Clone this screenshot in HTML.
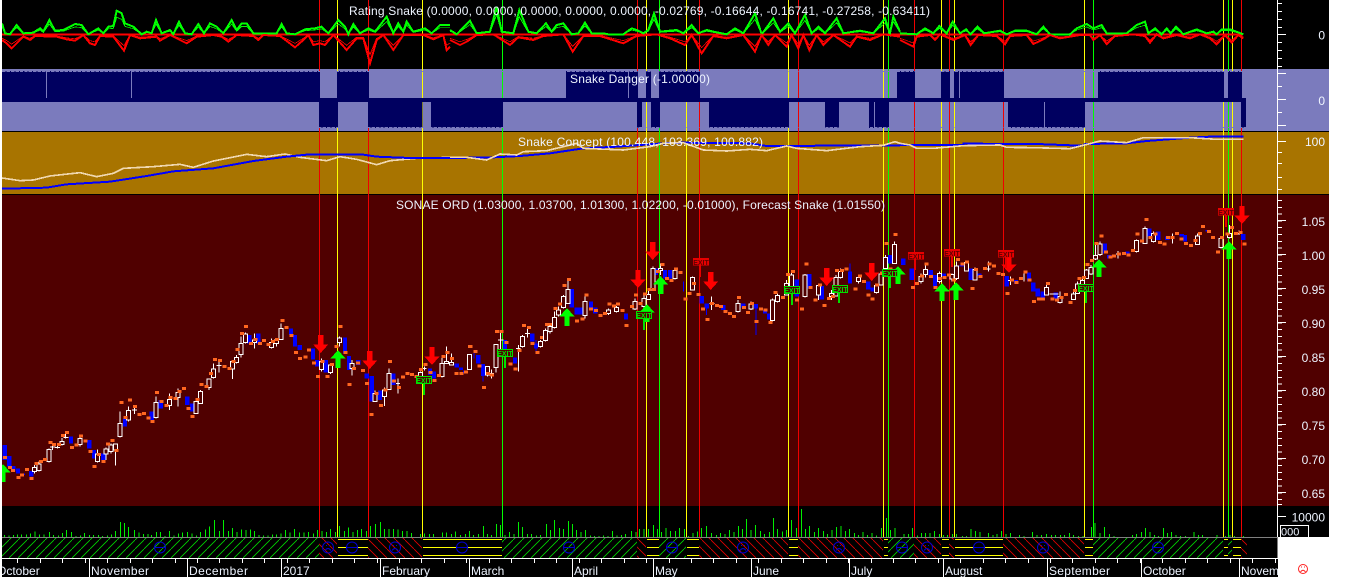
<!DOCTYPE html>
<html><head><meta charset="utf-8"><title>SONAE ORD</title>
<style>html,body{margin:0;padding:0;background:#fff;width:1352px;height:577px;overflow:hidden}svg{display:block}text{font-family:"Liberation Sans",sans-serif;font-size:12px;fill:#eef4ff}</style></head>
<body>
<svg xmlns="http://www.w3.org/2000/svg" width="1352" height="577" viewBox="0 0 1352 577">
<defs>
<pattern id="gh" width="9" height="9" patternUnits="userSpaceOnUse"><path d="M0 9L9 0" stroke="#00d800" stroke-width=".8" fill="none"/></pattern>
<pattern id="rh" width="9" height="9" patternUnits="userSpaceOnUse"><path d="M0 0L9 9" stroke="#e80000" stroke-width=".8" fill="none"/></pattern>
<polygon id="u" points="0,0 7.5,8.5 2.7,8.5 2.7,18 -2.7,18 -2.7,8.5 -7.5,8.5" fill="#00ff00"/>
<polygon id="d" points="0,18 7.5,9.5 2.7,9.5 2.7,0 -2.7,0 -2.7,9.5 -7.5,9.5" fill="#ff0000"/>
<g id="fn" fill="none" stroke="#0000d0"><circle r="5.5"/><path d="M-5 0H5"/></g>
<g id="ff" fill="none" stroke="#0000d0"><circle r="5.5"/><path d="M-3 3Q0 -1 3 3"/><path d="M-2 -2h1M1 -2h1"/></g>
</defs>
<g shape-rendering="crispEdges">
<rect x="2" y="0" width="1327" height="69" fill="#000"/>
<rect x="2" y="69" width="1327" height="62" fill="#7b7bbd"/>
<rect x="2" y="131" width="1327" height="63" fill="#a87400"/>
<rect x="2" y="194" width="1327" height="312" fill="#500000"/>
<rect x="2" y="506" width="1327" height="31" fill="#000"/>
<rect x="2" y="537" width="1276" height="40" fill="#000"/>
<rect x="2" y="131" width="1327" height="1" fill="#000"/>
<rect x="2" y="194" width="1327" height="1" fill="#000"/>
<!-- vertical signal lines -->
<path stroke="#f00000" d="M319.5 0V537M368.5 0V537M637.5 0V537M699.5 0V537M798.5 0V537M914.5 0V537M949.5 0V537M1003.5 0V537M1241.5 0V537"/>
<path stroke="#ffff00" d="M337.5 0V537M422.5 0V537M646.5 0V537M686.5 0V537M788.5 0V537M883.5 0V537M941.5 0V537M954.5 0V537M1084.5 0V537M1223.5 0V537M1232.5 0V537"/>
<path stroke="#00ff00" d="M502.5 0V537M659.5 0V537M888.5 0V537M1093.5 0V537M1228.5 0V537"/>
<!-- danger bands -->
<g fill="#000060">
<rect x="2" y="71" width="44" height="31"/><rect x="47" y="71" width="84" height="31"/><rect x="132" y="71" width="188" height="31"/><rect x="337" y="71" width="32" height="31"/>
<rect x="566" y="71" width="62" height="31"/><rect x="629" y="71" width="9" height="31"/><rect x="646" y="71" width="5" height="31"/><rect x="659" y="71" width="41" height="31"/>
<rect x="897" y="71" width="18" height="31"/><rect x="941" y="71" width="9" height="31"/><rect x="954" y="71" width="5" height="31"/><rect x="960" y="71" width="44" height="31"/>
<rect x="1098" y="71" width="126" height="31"/><rect x="1228" y="71" width="14" height="31"/>
<rect x="2" y="98" width="1240" height="4"/>
<rect x="319" y="98" width="19" height="30"/><rect x="368" y="98" width="54.5" height="30"/><rect x="431" y="98" width="72" height="30"/>
<rect x="637" y="98" width="5" height="30"/><rect x="651" y="98" width="9" height="30"/><rect x="709" y="98" width="80" height="30"/>
<rect x="825" y="98" width="14" height="30"/><rect x="869" y="98" width="5" height="30"/><rect x="875" y="98" width="14" height="30"/>
<rect x="1008" y="98" width="36" height="30"/><rect x="1045" y="98" width="40" height="30"/><rect x="1241" y="98" width="5" height="30"/>
</g>
<path stroke="#7b7bbd" stroke-dasharray="3.45 1" d="M2 71.5H1246M2 127.5H1246"/>
<!-- rating lines -->
<g fill="none" stroke-linejoin="miter">
<path stroke="#ff0000" stroke-width="2" d="M2 34.5H1243"/>
<g transform="scale(.33333)">
<g stroke="#00ff00" stroke-width="6"><polyline id="g1" points="6,70 15,100 30,103 50,75 70,100 100,98 120,85 130,95 148,60 165,92 190,90 225,72 245,75 265,103 295,85 310,100 325,80 340,78 350,32 365,40 375,70 400,80 425,103 440,95 455,100 468,60 485,100 510,90 520,103 537,65 555,100 575,103 595,72 612,100 630,70 650,80 670,100 695,60 710,90 725,70 740,70 760,100 830,100 845,72 860,100 885,103 915,88 945,85 965,80 985,100 1015,60 1035,80 1045,103 1060,72 1080,100 1105,85 1125,95 1160,50 1180,100 1195,70 1210,95 1220,65 1240,95 1275,85 1295,100 1320,75 1350,75"/></g>
<use href="#g1" stroke="#00ff00" stroke-width="3" transform="translate(0 103) scale(1 .72) translate(0 -103)"/>
<g stroke="#ff0000" stroke-width="6"><polyline id="r1" points="6,120 20,130 35,145 50,130 70,110 90,120 105,108 170,110 200,118 225,122 250,105 270,130 285,135 300,108 340,110 355,130 372,152 390,105 420,115 470,110 480,122 510,105 560,130 590,110 640,105 665,110 685,125 710,105 760,108 775,120 790,105 840,108 885,142 910,120 925,105 940,135 960,130 975,135 1000,105 1040,150 1070,115 1090,115 1110,190 1130,120 1150,105 1180,150 1210,105 1270,105 1300,118 1330,105 1340,150 1350,140"/></g>
<use href="#r1" stroke="#ff0000" stroke-width="3" transform="translate(0 103) scale(1 .7) translate(0 -103)"/>
</g>
<g transform="translate(450 0) scale(.33333)">
<g stroke="#00ff00" stroke-width="6"><polyline id="g2" points="0,90 20,103 60,62 80,100 120,95 140,20 155,95 190,100 208,30 235,95 260,100 288,70 305,95 320,75 340,70 365,103 385,100 405,68 425,100 460,100 475,103 520,103 545,85 560,90 580,100 595,90 612,40 630,95 680,90 700,100 725,75 745,100 770,90 790,95 830,103 855,85 880,100 915,40 935,103 970,55 990,95 1015,70 1035,100 1065,45 1085,100 1105,80 1125,100 1160,55 1180,100 1230,92 1270,100 1305,55 1320,100 1330,50 1350,95"/></g>
<use href="#g2" stroke="#00ff00" stroke-width="3" transform="translate(0 103) scale(1 .72) translate(0 -103)"/>
<g stroke="#ff0000" stroke-width="6"><polyline id="r2" points="0,120 30,135 50,125 80,105 130,103 180,135 205,112 250,120 280,108 340,103 368,155 400,108 450,108 520,130 560,108 620,103 660,115 705,135 725,105 755,160 790,108 830,115 880,105 915,155 935,105 955,135 975,105 1010,140 1025,105 1045,145 1060,105 1078,150 1100,105 1120,135 1150,105 1200,140 1220,110 1260,120 1300,103 1350,110"/></g>
<use href="#r2" stroke="#ff0000" stroke-width="3" transform="translate(0 103) scale(1 .7) translate(0 -103)"/>
</g>
<g transform="translate(900 0) scale(.33333)">
<g stroke="#00ff00" stroke-width="6"><polyline id="g3" points="0,100 50,103 75,85 100,100 118,78 140,100 158,65 180,100 198,88 212,103 232,80 252,100 300,92 320,103 345,92 380,92 410,103 430,80 450,103 510,103 530,85 560,72 580,85 605,75 620,100 680,100 710,75 735,65 745,100 765,85 785,103 800,85 812,100 828,80 850,103 890,88 920,100 940,95 950,103 965,88 990,88 1030,103"/></g>
<use href="#g3" stroke="#00ff00" stroke-width="3" transform="translate(0 103) scale(1 .72) translate(0 -103)"/>
<g stroke="#ff0000" stroke-width="6"><polyline id="r3" points="0,120 40,140 50,110 90,105 105,120 120,103 160,120 195,105 212,135 235,105 290,108 315,133 330,108 380,105 400,132 430,118 450,105 480,115 540,105 570,105 580,120 600,105 620,132 645,108 700,103 735,108 750,128 770,103 790,115 830,105 870,115 900,103 930,115 950,133 975,105 995,128 1015,105 1030,115"/></g>
<use href="#r3" stroke="#ff0000" stroke-width="3" transform="translate(0 103) scale(1 .7) translate(0 -103)"/>
</g>
</g>
<!-- concept lines -->
<g fill="none" stroke-width="5">
<g transform="scale(.33333)"><polyline stroke="#f0d8b0" points="6,534 60,542 100,540 150,528 240,518 290,530 340,520 370,505 460,500 540,493 580,502 640,483 740,463 800,470 855,462 900,472 980,482 1020,470 1070,478 1130,494 1170,482 1250,475 1350,472"/><polyline stroke="#0000ff" stroke-width="6" points="6,566 140,563 200,553 330,545 440,528 520,514 640,505 760,483 860,470 920,464 1090,464 1130,470 1230,474 1350,474"/></g>
<g transform="translate(450 0) scale(.33333)"><polyline stroke="#0000ff" stroke-width="6" points="0,474 130,472 210,468 300,460 400,445 500,440 640,430 700,428 900,430 950,438 1350,436"/><polyline stroke="#f0d8b0" points="0,472 50,472 110,480 150,462 200,465 220,455 290,452 340,440 380,430 400,445 520,450 600,440 640,430 700,428 760,450 830,453 900,448 950,452 1010,438 1040,445 1130,452 1230,440 1300,436 1335,425 1350,430"/></g>
<g transform="translate(900 0) scale(.33333)"><polyline stroke="#0000ff" stroke-width="6" points="0,435 190,435 190,431 410,432 515,436 550,436 555,432 680,430 740,423 870,413 930,410 1030,410"/><polyline stroke="#f0d8b0" points="0,430 30,435 50,445 100,445 190,437 300,435 320,442 400,443 510,446 550,436 600,423 680,428 730,413 870,413 950,418 1030,418"/></g>
</g>
<!-- candles A -->
<g fill="none" transform="translate(0 300) scale(.33333)">
<path stroke="#0000ff" stroke-width="13" d="M14 435V480M28 468V500M40 498V515M54 505V520M68 520V525M94 513V530M213 410V430M268 420V445M282 450V475M310 460V480M375 355V380M482 300V325M455 335V360M562 290V315M576 310V335M748 105V130M775 100V130M873 85V105M885 105V140M899 135V150M939 145V178M952 180V200M977 180V218M1035 112V160M1047 168V210M1075 180V195M1100 220V235M1115 228V305M1140 272V300M1180 220V255M1290 205V225M1302 215V235"/>
<path stroke="#fff" stroke-width="3" d="M104 495V520M117 485V515M147 445V487M186 414V436M240 405V440M293 448V488M318 442V480M333 430V460M346 430V497M360 335V412M386 320V365M468 290V355M508 280V330M534 265V320M588 300V342M601 270V312M627 235V270M641 190V235M697 180V237M710 165V190M723 110V172M737 97V130M763 100V145M815 115V145M829 115V140M843 70V120M965 175V215M991 190V222M1019 110V140M1056 180V226M1125 272V306M1153 262V318M1167 205V270M1261 214V245M1326 170V232M1340 140V192M158 435V450M150 441H166M172 435V445M165 443H180M197 400V416M190 412H205M657 180V218M650 197H665M403 315V342M396 330H411M1194 235V280M1188 250H1200M1273 200V212M1266 205H1280"/>
<path stroke="#fff" stroke-width="3.4" fill="#500000" d="M98 502h12V515h-12zM111 492h12V512h-12zM141 448h12V485h-12zM180 424h12V434h-12zM234 415h12V433h-12zM287 462h12V484h-12zM312 447h12V462h-12zM327 435h12V455h-12zM340 432h12V450h-12zM354 370h12V410h-12zM380 332h12V360h-12zM462 307h12V352h-12zM502 298h12V316h-12zM528 278h12V292h-12zM582 305h12V340h-12zM595 275h12V310h-12zM621 237h12V262h-12zM635 207h12V232h-12zM691 185h12V207h-12zM704 172h12V188h-12zM717 130h12V164h-12zM731 102h12V128h-12zM757 120h12V127h-12zM809 128h12V142h-12zM823 120h12V130h-12zM837 85h12V118h-12zM959 185h12V208h-12zM985 195h12V218h-12zM1013 114h12V128h-12zM1050 190h12V205h-12zM1119 280h12V304h-12zM1147 270h12V290h-12zM1161 220h12V268h-12zM1255 217h12V232h-12zM1320 190h12V230h-12zM1334 184h12V190h-12z"/>
<path stroke="#ff6620" stroke-width="9" stroke-linecap="square" d="M14 472h3M28 503h3M38 511h3M54 532h3M65 525h3M80 508h3M93 535h3M108 490h3M122 484h3M133 478h3M150 427h3M161 433h3M176 433h3M188 406h3M200 397h3M215 442h3M228 435h3M242 408h3M255 423h3M270 454h3M282 499h3M295 463h3M309 484h3M323 432h3M336 421h3M348 451h3M363 307h3M375 352h3M388 300h3M404 319h3M417 344h3M431 340h3M444 354h3M456 364h3M470 277h3M483 304h3M498 316h3M510 293h3M525 295h3M537 274h3M550 265h3M564 326h3M576 349h3M591 298h3M603 253h3M618 259h3M631 220h3M644 178h3M659 181h3M672 200h3M687 205h3M699 184h3M711 148h3M725 100h3M737 79h3M752 130h3M765 118h3M778 130h3M790 122h3M804 133h3M818 125h3M830 118h3M846 61h3M858 82h3M873 106h3M887 157h3M899 175h3M915 171h3M926 150h3M941 189h3M953 229h3M966 184h3M981 229h3M994 193h3M1008 139h3M1020 79h3M1035 157h3M1047 253h3M1060 205h3M1073 189h3M1087 211h3M1100 250h3M1113 343h3M1128 280h3M1142 316h3M1155 270h3M1169 184h3M1181 243h3M1195 263h3M1208 231h3M1221 220h3M1235 224h3M1248 230h3M1262 208h3M1275 193h3M1290 218h3M1302 241h3M1315 226h3M1329 169h3M1341 157h3"/>
</g>
<!-- candles B -->
<g fill="none" transform="translate(450 320) scale(.33333)">
<path stroke="#0000ff" stroke-width="13" d="M20 130V142M33 142V150M46 152V160M85 105V130M99 132V168M165 60V100M195 112V130M247 40V65M258 70V85"/>
<path stroke="#0000ff" stroke-width="3" d="M72 92V115M99 168V185M258 60V98"/>
<path stroke="#fff" stroke-width="3" d="M4 100V135M58 103V148M138 73V158M152 30V100M144 60H160M113 140V170M125 148V175M118 160H132M205 75V155M198 85H212M217 45V82M232 25V52M225 41H240M272 60V82"/>
<path stroke="#fff" stroke-width="3.4" fill="#500000" d="M-2 128h12V135h-12zM52 103h12V148h-12zM132 73h12V143h-12zM107 140h12V165h-12zM211 50h12V80h-12zM266 65h12V80h-12z"/>
<path stroke="#ff6620" stroke-width="9" stroke-linecap="square" d="M5 116h3M18 160h3M33 160h3M46 156h3M59 79h3M75 95h3M87 138h3M100 202h3M113 160h3M125 165h3M140 35h3M153 34h3M168 68h3M180 132h3M195 147h3M207 92h3M220 16h3M235 22h3M246 71h3M261 98h3M274 52h3M290 13h3M302 13h3"/>
</g>
<g fill="none" transform="translate(450 200) scale(.33333)">
<path stroke="#0000ff" stroke-width="13" d="M365 267V323M380 323V343M392 323V343M423 305V325M436 323V340M528 340V358M617 205V225M645 210V235M660 210V235M755 288V310M770 310V325M820 315V330M880 310V322M918 312V325M945 330V340M958 340V358M1040 238V290M1078 222V265M1115 258V298M1200 215V250M1255 245V268M1268 262V275M1320 165V190"/>
<path stroke="#0000ff" stroke-width="3" d="M918 325V405M770 325V345M700 245V275M1200 190V215"/>
<path stroke="#fff" stroke-width="3" d="M286 385V425M300 375V400M313 335V385M326 320V350M340 285V325M354 240V312M405 285V355M500 318V338M475 325V345M555 295V330M582 285V322M596 270V300M609 200V272M632 190V225M675 205V238M727 230V272M785 290V330M864 300V338M903 305V330M968 295V364M982 280V308M1010 240V287M1025 212V262M1065 222V292M1105 250V300M1145 270V300M1158 225V290M1172 205V235M1225 225V250M1280 250V280M1293 215V257M1307 165V210M1333 125V192"/>
<path stroke="#fff" stroke-width="3.4" fill="#500000" d="M280 392h12V422h-12zM294 380h12V395h-12zM307 352h12V383h-12zM320 330h12V345h-12zM334 290h12V322h-12zM348 268h12V310h-12zM399 305h12V347h-12zM494 322h12V335h-12zM469 330h12V340h-12zM549 305h12V327h-12zM576 295h12V320h-12zM590 283h12V298h-12zM603 205h12V270h-12zM626 205h12V212h-12zM669 212h12V235h-12zM721 233h12V270h-12zM858 310h12V335h-12zM897 312h12V327h-12zM962 300h12V362h-12zM976 287h12V305h-12zM1004 250h12V285h-12zM1019 225h12V260h-12zM1059 225h12V290h-12zM1099 257h12V285h-12zM1139 280h12V290h-12zM1152 232h12V288h-12zM1166 215h12V232h-12zM1219 233h12V245h-12zM1274 257h12V278h-12zM1287 222h12V255h-12zM1301 172h12V205h-12zM1327 133h12V190h-12z"/>
<path stroke="#fff" stroke-width="3" d="M778 311H793"/>
<path stroke="#ff6620" stroke-width="9" stroke-linecap="square" d="M60 439h3M315 325h3M328 312h3M342 257h3M356 238h3M380 363h3M396 357h3M408 285h3M422 327h3M436 331h3M450 347h3M463 340h3M477 312h3M490 318h3M502 312h3M516 331h3M528 376h3M544 320h3M557 285h3M570 310h3M583 282h3M597 268h3M610 268h3M623 214h3M636 193h3M650 235h3M663 242h3M677 207h3M690 218h3M705 297h3M717 280h3M730 250h3M744 283h3M757 327h3M771 358h3M785 310h3M800 316h3M811 320h3M825 335h3M838 340h3M850 350h3M866 292h3M880 322h3M892 338h3M905 310h3M918 365h3M931 327h3M945 330h3M960 367h3M975 278h3M998 293h3M1012 223h3M1027 215h3M1040 300h3M1055 327h3M1068 192h3M1080 262h3M1095 300h3M1108 255h3M1122 316h3M1135 295h3M1148 290h3M1160 212h3M1175 212h3M1188 207h3M1215 267h3M1228 228h3M1240 244h3M1254 285h3M1266 297h3M1280 255h3M1295 220h3M1308 130h3M1320 207h3M1335 103h3"/>
</g>
<!-- candles C -->
<g fill="none" transform="translate(900 190) scale(.33333)">
<path stroke="#0000ff" stroke-width="13" d="M10 205V225M35 235V270M92 240V258M105 255V290M132 250V260M185 225V230M212 235V270M238 250V258M320 258V290M348 270V280M387 247V275M400 277V305M413 295V320M428 305V325M467 308V325M615 160V190M628 195V205M682 185V190M748 115V140M775 125V150M802 140V150M855 135V155M923 120V125M1030 132V150M845 132V140"/>
<path stroke="#fff" stroke-width="3" d="M63 250V280M77 225V262M118 245V280M156 250V275M170 215V270M199 213V245M225 232V272M265 215V245M331 260V285M372 248V275M440 280V317M480 305V340M520 300V330M533 275V312M547 265V292M560 237V267M573 225V255M587 160V210M600 155V198M654 183V205M709 148V188M735 110V162M761 125V158M817 130V160M893 130V165M963 142V175M989 105V145M1017 122V135M258 237H272M324 271H340M1010 130H1024M648 192H662M448 312H475"/>
<path stroke="#fff" stroke-width="3.4" fill="#500000" d="M57 260h12V275h-12zM71 238h12V254h-12zM112 250h12V275h-12zM150 253h12V267h-12zM164 228h12V265h-12zM193 218h12V243h-12zM219 238h12V270h-12zM434 292h12V315h-12zM474 320h12V338h-12zM514 312h12V328h-12zM527 282h12V310h-12zM541 272h12V290h-12zM554 240h12V265h-12zM567 232h12V252h-12zM581 197h12V207h-12zM594 162h12V194h-12zM703 152h12V185h-12zM729 115h12V160h-12zM755 130h12V155h-12zM887 138h12V163h-12zM957 145h12V172h-12zM983 130h12V143h-12z"/>
<path stroke="#ff6620" stroke-width="9" stroke-linecap="square" d="M38 293h3M50 280h3M65 258h3M78 222h3M92 260h3M105 293h3M118 265h3M132 262h3M145 255h3M160 270h3M172 209h3M186 222h3M200 216h3M216 295h3M226 238h3M240 260h3M254 235h3M267 222h3M281 228h3M294 250h3M307 254h3M321 310h3M335 270h3M348 278h3M362 265h3M375 246h3M387 270h3M400 334h3M415 327h3M428 327h3M443 280h3M456 327h3M470 330h3M483 323h3M496 313h3M510 337h3M523 301h3M537 265h3M550 262h3M561 223h3M575 211h3M588 160h3M603 138h3M616 186h3M630 201h3M640 198h3M655 192h3M670 190h3M684 195h3M697 182h3M711 132h3M725 153h3M738 88h3M750 142h3M765 132h3M778 157h3M792 162h3M803 142h3M816 142h3M830 130h3M843 147h3M857 160h3M871 166h3M885 152h3M898 130h3M908 110h3M925 125h3M938 142h3M953 186h3M965 142h3M981 132h3M994 113h3M1007 130h3M1020 127h3M1032 162h3"/>
</g>
<!-- arrows -->
<use href="#u" x="338" y="350"/><use href="#u" x="3" y="464"/><use href="#u" x="567" y="308"/><use href="#u" x="647" y="304"/><use href="#u" x="660.6" y="276"/><use href="#u" x="898" y="266"/><use href="#u" x="942" y="283"/><use href="#u" x="956" y="282"/><use href="#u" x="1099" y="259"/><use href="#u" x="1229" y="241"/>
<use href="#d" x="320.7" y="335"/><use href="#d" x="369.7" y="351"/><use href="#d" x="432" y="347"/><use href="#d" x="638" y="270"/><use href="#d" x="652.7" y="242"/><use href="#d" x="710.7" y="272"/><use href="#d" x="826.7" y="268"/><use href="#d" x="871.7" y="263"/><use href="#d" x="1009" y="255"/><use href="#d" x="1242" y="206"/>
<!-- exit stems & boxes -->
<path stroke="#00e000" stroke-width="2" d="M424 383V395M505 356V368M644 318V330M792 293V305M839 292V303M890 276V288M1086 291V303"/>
<path stroke="#e80000" stroke-width="2" d="M700 265V277M915 259V270M952 256V267M1006 257V268M1226 215V227"/>
<g fill="#500000" stroke="#00e000"><rect x="416.5" y="376.5" width="15" height="7"/><rect x="497.5" y="349.5" width="15" height="7"/><rect x="636.5" y="311.5" width="15" height="7"/><rect x="784.5" y="286.5" width="15" height="7"/><rect x="832.5" y="285.5" width="15" height="7"/><rect x="882.5" y="269.5" width="15" height="7"/><rect x="1078.5" y="284.5" width="15" height="7"/></g>
<g fill="#e80000"><rect x="693" y="258" width="16" height="7.5"/><rect x="908" y="252" width="16" height="7.5"/><rect x="944" y="249" width="16" height="7.5"/><rect x="998" y="250" width="16" height="7.5"/><rect x="1218" y="208" width="16" height="7.5"/></g>
<!-- volume -->
<g fill="none" stroke="#00ee00" stroke-width="3">
<path transform="translate(0 500) scale(.33333)" d="M14 105V111M27 106V111M40 105V111M52 103V111M65 103V111M79 104V111M92 101V111M105 94V111M119 104V111M132 104V111M148 96V111M161 105V111M175 107V111M187 99V111M200 90V111M214 96V111M228 108V111M241 107V111M254 99V111M268 105V111M281 105V111M295 105V111M308 108V111M322 106V111M335 104V111M347 93V111M361 66V111M374 69V111M386 81V111M403 90V111M417 97V111M431 102V111M444 102V111M455 105V111M469 96V111M482 96V111M495 108V111M508 93V111M522 106V111M535 101V111M548 98V111M562 96V111M576 100V111M589 106V111M602 96V111M616 88V111M629 80V111M644 60V111M658 93V111M671 60V111M685 93V111M698 84V111M711 96V111M724 88V111M738 90V111M751 88V111M763 93V111M777 105V111M790 106V111M804 106V111M817 103V111M830 103V111M843 100V111M857 90V111M870 97V111M884 87V111M899 98V111M912 97V111M926 96V111M940 100V111M953 90V111M966 93V111M979 96V111M992 87V111M1006 96V111M1019 78V111M1033 93V111M1046 82V111M1059 96V111M1072 90V111M1085 87V111M1099 93V111M1112 78V111M1126 72V111M1141 66V111M1154 87V111M1167 87V111M1180 87V111M1194 88V111M1207 93V111M1221 93V111M1234 99V111M1262 102V111M1274 100V111M1288 102V111M1301 102V111M1327 97V111M1340 97V111"/>
<path transform="translate(450 500) scale(.33333)" d="M4 102V111M17 94V111M31 105V111M46 102V111M58 93V111M71 105V111M85 102V111M100 78V111M113 102V111M125 105V111M139 72V111M152 75V111M165 105V111M179 96V111M192 102V111M205 66V111M218 81V111M232 102V111M245 102V111M259 106V111M272 105V111M289 72V111M302 90V111M313 60V111M328 84V111M340 87V111M355 63V111M367 72V111M380 90V111M393 96V111M407 90V111M421 106V111M434 108V111M447 108V111M461 106V111M474 108V111M487 93V111M501 106V111M514 105V111M527 102V111M545 93V111M558 96V111M569 87V111M582 87V111M596 87V111M610 75V111M622 87V111M635 96V111M648 84V111M662 93V111M676 93V111M689 84V111M703 87V111M716 108V111M729 99V111M742 94V111M755 84V111M769 78V111M785 99V111M800 105V111M811 99V111M825 102V111M838 90V111M852 96V111M865 78V111M878 87V111M889 57V111M903 90V111M917 75V111M931 93V111M944 102V111M958 96V111M970 54V111M983 87V111M997 94V111M1010 90V111M1024 60V111M1040 84V111M1054 27V111M1067 87V111M1078 78V111M1094 96V111M1106 84V111M1120 93V111M1133 102V111M1146 90V111M1160 81V111M1173 78V111M1186 93V111M1199 87V111M1213 99V111M1226 105V111M1239 96V111M1252 105V111M1266 99V111M1280 106V111M1294 84V111M1309 54V111M1322 90V111M1335 84V111"/>
<path transform="translate(900 500) scale(.33333)" d="M12 102V111M25 102V111M38 84V111M52 106V111M65 99V111M76 99V111M90 99V111M103 93V111M118 102V111M130 105V111M143 105V111M157 102V111M170 102V111M187 108V111M200 108V111M213 87V111M226 93V111M240 96V111M265 99V111M279 105V111M291 102V111M304 93V111M318 102V111M331 99V111M358 105V111M372 108V111M398 96V111M411 105V111M424 105V111M440 102V111M454 105V111M467 105V111M481 105V111M494 105V111M508 99V111M521 105V111M535 108V111M549 108V111M574 81V111M585 69V111M600 99V111M613 81V111M628 102V111M642 108V111M697 105V111M710 102V111M724 96V111M736 84V111M750 96V111M763 105V111M776 108V111M790 84V111M803 99V111M815 96V111M828 105V111M842 108V111M856 108V111M882 96V111M895 105V111M908 105V111M951 105V111M976 108V111M990 105V111M1004 108V111M1030 108V111"/>
</g>
<!-- hatch row -->
<rect x="2" y="537" width="1275" height="1" fill="#808080"/>
<g>
<rect x="2" y="538" width="317" height="20" fill="url(#gh)"/><rect x="319" y="538" width="18" height="20" fill="url(#rh)"/><rect x="368" y="538" width="54" height="20" fill="url(#rh)"/><rect x="502" y="538" width="135" height="20" fill="url(#gh)"/><rect x="637" y="538" width="9" height="20" fill="url(#rh)"/><rect x="659" y="538" width="27" height="20" fill="url(#gh)"/><rect x="699" y="538" width="89" height="20" fill="url(#rh)"/><rect x="798" y="538" width="85" height="20" fill="url(#rh)"/><rect x="888" y="538" width="26" height="20" fill="url(#gh)"/><rect x="914" y="538" width="27" height="20" fill="url(#rh)"/><rect x="949" y="538" width="5" height="20" fill="url(#rh)"/><rect x="1003" y="538" width="81" height="20" fill="url(#rh)"/><rect x="1093" y="538" width="130" height="20" fill="url(#gh)"/><rect x="1228" y="538" width="4" height="20" fill="url(#gh)"/><rect x="1241" y="538" width="6" height="20" fill="url(#rh)"/>
</g>
<g stroke="#ffff00" stroke-width="1">
<path d="M338 539.5H368M338 547.5H368M338 555.5H368M423 539.5H502M423 547.5H502M423 555.5H502M647 539.5H659M647 547.5H659M647 555.5H659M687 539.5H699M687 547.5H699M687 555.5H699M789 539.5H798M789 547.5H798M789 555.5H798M884 539.5H888M884 547.5H888M884 555.5H888M942 539.5H949M942 547.5H949M942 555.5H949M955 539.5H1003M955 547.5H1003M955 555.5H1003M1085 539.5H1093M1085 547.5H1093M1085 555.5H1093M1224 539.5H1228M1224 547.5H1228M1224 555.5H1228M1233 539.5H1241M1233 547.5H1241M1233 555.5H1241"/>
</g>
<!-- axis -->
<rect x="2" y="558" width="1276" height="1" fill="#fff"/>
<path stroke="#fff" d="M89.5 558V577M187.5 558V577M281.5 558V577M380.5 558V577M469.5 558V577M572.5 558V577M653.5 558V577M751.5 558V577M849.5 558V577M943.5 558V577M1047.5 558V577M1141.5 558V577M1239.5 558V577"/>
<path stroke="#fff" d="M17.5 558V563M40.5 558V563M62.5 558V563M85.5 558V563M107.5 558V563M130.5 558V563M152.5 558V563M175.5 558V563M197.5 558V563M219.5 558V563M242.5 558V563M264.5 558V563M287.5 558V563M309.5 558V563M332.5 558V563M354.5 558V563M377.5 558V563M399.5 558V563M421.5 558V563M444.5 558V563M466.5 558V563M489.5 558V563M511.5 558V563M534.5 558V563M556.5 558V563M579.5 558V563M601.5 558V563M624.5 558V563M646.5 558V563M669.5 558V563M691.5 558V563M713.5 558V563M736.5 558V563M758.5 558V563M781.5 558V563M803.5 558V563M826.5 558V563M848.5 558V563M871.5 558V563M893.5 558V563M915.5 558V563M938.5 558V563M960.5 558V563M983.5 558V563M1005.5 558V563M1028.5 558V563M1050.5 558V563M1072.5 558V563M1095.5 558V563M1117.5 558V563M1140.5 558V563M1162.5 558V563M1185.5 558V563M1207.5 558V563M1230.5 558V563M1252.5 558V563M1275.5 558V563"/>
<!-- right axis -->
<rect x="1277" y="0" width="1" height="537" fill="#fff"/>
<rect x="1277" y="537" width="1" height="21" fill="#808080"/>
<path stroke="#fff" d="M1278 34.5H1286M1278 73.5H1286M1278 99.5H1286M1278 125.5H1286M1278 141.5H1286M1278 220.5H1286M1278 254.5H1286M1278 288.5H1286M1278 322.5H1286M1278 356.5H1286M1278 390.5H1286M1278 424.5H1286M1278 458.5H1286M1278 492.5H1286M1278 516.5H1286M1278 504.5H1282M1278 3.5H1282M1278 11.5H1282M1278 19.5H1282M1278 27.5H1282M1278 42.5H1282M1278 50.5H1282M1278 58.5H1282M1278 66.5H1282M1278 86.5H1282M1278 112.5H1282M1278 152.5H1282M1278 163.5H1282M1278 177.5H1282M1278 189.5H1282"/>
<path stroke="#fff" stroke-width="4" stroke-dasharray="1 5.8" d="M1280 200V506"/>
<rect x="1280.5" y="525.5" width="28" height="12" fill="#000" stroke="#fff"/>
<!-- faces -->
<g shape-rendering="auto">
<use href="#fn" x="160" y="547.5"/><use href="#ff" x="328" y="547.5"/><use href="#fn" x="352" y="547.5"/><use href="#ff" x="395" y="547.5"/><use href="#fn" x="462" y="547.5"/><use href="#fn" x="569" y="547.5"/><use href="#fn" x="672" y="547.5"/><use href="#ff" x="743" y="547.5"/><use href="#ff" x="839" y="547.5"/><use href="#fn" x="902" y="547.5"/><use href="#ff" x="927" y="547.5"/><use href="#fn" x="979" y="547.5"/><use href="#ff" x="1043" y="547.5"/><use href="#fn" x="1158" y="547.5"/>
</g>
</g>
<!-- exit labels -->
<g style="font-weight:bold" text-anchor="middle">
<text x="424" y="383" style="fill:#00e000;font-size:7px">EXIT</text><text x="505" y="356" style="fill:#00e000;font-size:7px">EXIT</text><text x="644" y="318" style="fill:#00e000;font-size:7px">EXIT</text><text x="792" y="293" style="fill:#00e000;font-size:7px">EXIT</text><text x="840" y="292" style="fill:#00e000;font-size:7px">EXIT</text><text x="890" y="276" style="fill:#00e000;font-size:7px">EXIT</text><text x="1086" y="291" style="fill:#00e000;font-size:7px">EXIT</text>
<text x="701" y="265" style="fill:#600000;font-size:7px">EXIT</text><text x="916" y="259" style="fill:#600000;font-size:7px">EXIT</text><text x="952" y="256" style="fill:#600000;font-size:7px">EXIT</text><text x="1006" y="257" style="fill:#600000;font-size:7px">EXIT</text><text x="1226" y="215" style="fill:#600000;font-size:7px">EXIT</text>
</g>
<!-- titles -->
<text x="349" y="15" textLength="581">Rating Snake (0.0000, 0.0000, 0.0000, 0.0000, 0.0000, -0.02769, -0.16644, -0.16741, -0.27258, -0.63411)</text>
<text x="570" y="83" textLength="140">Snake Danger (-1.00000)</text>
<text x="518" y="146" textLength="245">Snake Concept (100.448, 103.369, 100.882)</text>
<text x="396" y="209" textLength="489">SONAE ORD (1.03000, 1.03700, 1.01300, 1.02200, -0.01000), Forecast Snake (1.01550)</text>
<!-- axis labels -->
<g text-anchor="end">
<text x="1325" y="39.5">0</text><text x="1325" y="105">0</text><text x="1325" y="146">100</text>
<text x="1325" y="226">1.05</text><text x="1325" y="260">1.00</text><text x="1325" y="294">0.95</text><text x="1325" y="328">0.90</text><text x="1325" y="362">0.85</text><text x="1325" y="396">0.80</text><text x="1325" y="430">0.75</text><text x="1325" y="464">0.70</text><text x="1325" y="498">0.65</text><text x="1325" y="521.5">10000</text>
</g>
<text x="1281" y="535.5" style="font-size:11px">000</text>
<text x="-3" y="575">October</text><text x="91" y="575" textLength="58">November</text><text x="189" y="575" textLength="59">December</text><text x="283" y="575">2017</text><text x="382" y="575">February</text><text x="471" y="575">March</text><text x="574" y="575">April</text><text x="655" y="575">May</text><text x="753" y="575">June</text><text x="851" y="575">July</text><text x="945" y="575">August</text><text x="1049" y="575" textLength="61">September</text><text x="1143" y="575">October</text><text x="1241" y="575">November</text>
<rect x="0" y="0" width="2" height="577" fill="#fff"/>
<rect x="1278" y="537" width="74" height="40" fill="#fff"/>
<g fill="none" stroke="#ff2020"><circle cx="1303" cy="569" r="4.5"/><path d="M1300.5 572Q1303 568.5 1305.5 572M1301 567h1M1304 567h1"/></g>
</svg>
</body></html>
